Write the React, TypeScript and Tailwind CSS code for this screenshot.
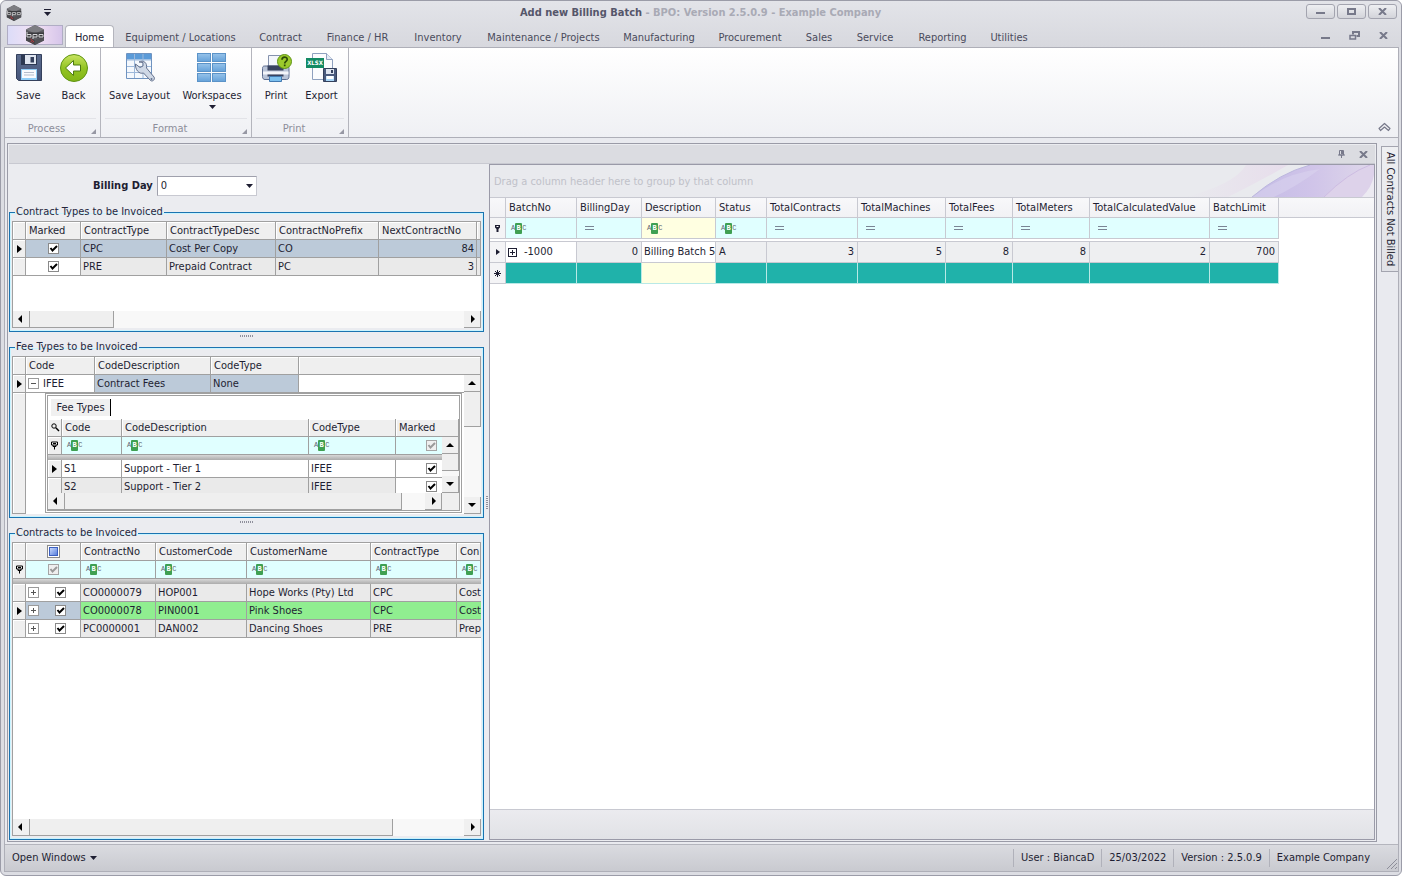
import { useState } from "react";
import type { ReactNode } from "react";
import clsx from "clsx";

const tabs = [
  { name: "Home", width: "w-[49px]" },
  { name: "Equipment / Locations", width: "w-[133px]" },
  { name: "Contract", width: "w-[67px]" },
  { name: "Finance / HR", width: "w-[87px]" },
  { name: "Inventory", width: "w-[74px]" },
  { name: "Maintenance / Projects", width: "w-[137px]" },
  { name: "Manufacturing", width: "w-[94px]" },
  { name: "Procurement", width: "w-[88px]" },
  { name: "Sales", width: "w-[50px]" },
  { name: "Service", width: "w-[62px]" },
  { name: "Reporting", width: "w-[73px]" },
  { name: "Utilities", width: "w-[60px]" },
];

const contractTypes = [
  { type: "CPC", desc: "Cost Per Copy", prefix: "CO", next: 84 },
  { type: "PRE", desc: "Prepaid Contract", prefix: "PC", next: 3 },
];

const feeTypes = [
  { code: "S1", desc: "Support - Tier 1", type: "IFEE" },
  { code: "S2", desc: "Support - Tier 2", type: "IFEE" },
];

const contracts = [
  { no: "CO0000079", customer: "HOP001", name: "Hope Works (Pty) Ltd", type: "CPC", desc: "Cost" },
  { no: "CO0000078", customer: "PIN0001", name: "Pink Shoes", type: "CPC", desc: "Cost" },
  { no: "PC0000001", customer: "DAN002", name: "Dancing Shoes", type: "PRE", desc: "Prep" },
];

const batchColumns = [
  { name: "BatchNo", width: "w-[71px]", filter: "abc" },
  { name: "BillingDay", width: "w-[65px]", filter: "eq" },
  { name: "Description", width: "w-[74px]", filter: "abc" },
  { name: "Status", width: "w-[51px]", filter: "abc" },
  { name: "TotalContracts", width: "w-[91px]", filter: "eq" },
  { name: "TotalMachines", width: "w-[88px]", filter: "eq" },
  { name: "TotalFees", width: "w-[67px]", filter: "eq" },
  { name: "TotalMeters", width: "w-[77px]", filter: "eq" },
  { name: "TotalCalculatedValue", width: "w-[120px]", filter: "eq" },
  { name: "BatchLimit", width: "w-[69px]", filter: "eq" },
];

/* ---------- icons ---------- */

const BpoLogo = ({ className }: { className: string }) => (
  <svg viewBox="0 0 20 20" className={className} aria-hidden="true">
    <path d="M10 0l9 4.600v10.800L10 20l-9-4.600V4.600z" fill="#5c5c61" />
    <path d="M10 0l9 4.600-9 4-9-4z" fill="#7d7d82" />
    <path d="M1 11l9 4v5l-9-4.600z" fill="#46464a" />
    <path d="M19 11l-9 4v5l9-4.600z" fill="#515156" />
    <path d="M1 7.500h18v5H1z" fill="#3a3a3e" />
    <path d="M2 7v5h4V9.500H2M8 14V9.500h4V12H8M14 9.500h4V12h-4z" fill="none" stroke="#d6d6d8" />
    <path d="M5.500 14l2 1.500-2 1.500M9 16l-1.500 1.500" fill="none" stroke="#c0353b" />
  </svg>
);

const DownArrow = ({ className }: { className?: string }) => (
  <svg viewBox="0 0 7 4" className={clsx("h-1 w-[7px] shrink-0 fill-[#1e1e32]", className)} aria-hidden="true">
    <path d="M0 0h7L3.500 4z" />
  </svg>
);

const SaveIcon = () => (
  <svg viewBox="0 0 28 30" className="h-[30px] w-7" aria-hidden="true">
    <defs>
      <linearGradient id="disk" x1="0" y1="0" x2="0" y2="1">
        <stop offset="0" stopColor="#5b6c8e" />
        <stop offset="1" stopColor="#46557a" />
      </linearGradient>
    </defs>
    <path d="M1.500 1.500h25v26h-23l-2-2z" fill="url(#disk)" stroke="#34405c" />
    <path d="M6 2h16v10H6z" fill="#2c3852" />
    <path d="M10 2h11v9H10z" fill="#dfe5f0" />
    <path d="M15.500 4h3.500v5.500h-3.500z" fill="#34405c" />
    <path d="M6 16h16v11H6z" fill="#8fcdf7" />
    <path d="M7 17h14v8H7z" fill="#f8fafd" />
    <path d="M9 19.500h10M9 22h10" stroke="#b4bccb" />
  </svg>
);

const BackIcon = () => (
  <svg viewBox="0 0 30 30" className="size-[30px]" aria-hidden="true">
    <defs>
      <linearGradient id="ball" x1="0" y1="0" x2="0" y2="1">
        <stop offset="0" stopColor="#c9e462" />
        <stop offset="0.500" stopColor="#93c422" />
        <stop offset="1" stopColor="#82b516" />
      </linearGradient>
    </defs>
    <circle cx="15" cy="15" r="13.500" fill="url(#ball)" stroke="#5f9413" />
    <path d="M6.500 15l8-7.500v4.500h7v6h-7v4.500z" fill="#fff" stroke="#4d7a12" strokeLinejoin="round" />
  </svg>
);

const LayoutIcon = () => (
  <svg viewBox="0 0 30 30" className="size-[30px]" aria-hidden="true">
    <path d="M1.500.500h25v25h-25z" fill="#f4f8fd" stroke="#6f93c0" />
    <path d="M2 1h24v5.500H2z" fill="#5b9bd8" />
    <path d="M2 7h24M2 13.500h24M2 19.500h24M9.500 1v24M18 1v24" stroke="#9db8da" />
    <path
      d="M10.500 11l4.500 3.500 3-1.500v-3.500l-4-.500c4.500-2.500 8.500 1 7.500 6l7.500 9c1.500 2.500-1.500 5-3.500 3.500L18.500 20c-4.500 1.500-8.500-3.500-8-9z"
      fill="#cfd8e6"
      stroke="#65728e"
      strokeLinejoin="round"
    />
    <circle cx="26.500" cy="26" r="1" fill="#65728e" />
  </svg>
);

const WorkspacesIcon = () => (
  <svg viewBox="0 0 30 30" className="size-[30px]" aria-hidden="true">
    <defs>
      <linearGradient id="pane" x1="0" y1="0" x2="0" y2="1">
        <stop offset="0" stopColor="#97c3ea" />
        <stop offset="1" stopColor="#64a1d9" />
      </linearGradient>
    </defs>
    {[0.5, 10.5, 20.5].map((y) => (
      <g key={y} fill="url(#pane)" stroke="#5b93c8">
        <rect x="0.500" y={y} width="13" height="8" />
        <rect x="15.500" y={y} width="13" height="8" />
      </g>
    ))}
  </svg>
);

const PrintIcon = () => (
  <svg viewBox="0 0 32 30" className="h-[30px] w-8" aria-hidden="true">
    <path d="M8.500 2.500h14v12h-14z" fill="#f3f6fb" stroke="#8592ad" />
    <path d="M4.500 13h22.500c1.500 0 2 1 2 2.500v8c0 2-1 3-2.500 3H5c-1.500 0-2.500-1-2.500-3v-8c0-1.500.500-2.500 2-2.500z" fill="#b9c4d8" stroke="#5c6c8f" />
    <path d="M7.500 12.500h16v5h-16z" fill="#38435f" />
    <path d="M3 18.500h25.500v3H3z" fill="#f3f5fa" />
    <path d="M7.500 21.500h16v2h-16z" fill="#38435f" />
    <path d="M9.500 23.500h12v5h-12z" fill="#7cc0ef" stroke="#4379b0" />
    <circle cx="24.500" cy="8.500" r="7" fill="#9ccb2c" stroke="#5f9413" />
    <path d="M22 6.800c0-3.600 5.200-3.400 5.200-.400 0 2-2.500 1.900-2.500 4M24.700 11.600v1.600" fill="none" stroke="#2c4a08" strokeWidth="1.700" />
  </svg>
);

const ExportIcon = () => (
  <svg viewBox="0 0 32 30" className="h-[30px] w-8" aria-hidden="true">
    <path d="M6.500.500h14l6 6v20h-20z" fill="#fbfcfe" stroke="#8fa1bf" />
    <path d="M20.500.500v6h6" fill="#e4eaf4" stroke="#8fa1bf" />
    <path d="M0 5h18v10H0z" fill="#138a63" />
    <text x="9" y="12.200" fontSize="6" fontWeight="bold" fill="#fff" textAnchor="middle">
      XLSX
    </text>
    <path d="M17.500 15.500h13v13h-13z" fill="#4b5b7e" stroke="#34405c" />
    <path d="M20 16h8v5h-8z" fill="#dfe5f0" />
    <path d="M25 17h2v3h-2z" fill="#34405c" />
    <path d="M20 23h8v5h-8z" fill="#a8d6f7" />
    <path d="M20.500 23h7v3h-7z" fill="#fff" />
  </svg>
);

const ABC = () => (
  <span className="flex h-[11px] items-center font-['Liberation_Mono',monospace] text-[7px] leading-[11px] text-[#5d6570]" aria-hidden="true">
    <span>A</span>
    <span className="w-[7px] rounded-[1px] bg-[#3fa052] text-center font-bold text-white">B</span>
    <span>C</span>
  </span>
);

const Equals = () => <span className="h-1 w-[9px] border-y border-[#7a8494]" aria-hidden="true" />;

const FilterPin = () => (
  <svg viewBox="0 0 7 9" className="mx-auto h-[9px] w-[7px]" aria-hidden="true">
    <path d="M.500 1h6v3h-6zM2 4v1.500h3V4M3.500 5v3.500M2 2.500h3" fill="none" stroke="#000" />
  </svg>
);

const RowPointer = () => (
  <svg viewBox="0 0 5 8" className="mx-auto h-2 w-[5px]" aria-hidden="true">
    <path d="M0 0l5 4-5 4z" />
  </svg>
);

const CloseGlyph = () => (
  <svg viewBox="0 0 9 7" className="h-[7px] w-[9px]" aria-hidden="true">
    <path d="M1 0l7 7M8 0L1 7" stroke="#77798a" strokeWidth="2" />
  </svg>
);

const MinGlyph = () => <span className="mt-1 block h-0.5 w-[9px] bg-[#77798a]" aria-hidden="true" />;

const RestoreGlyph = () => (
  <svg viewBox="0 0 11 9" className="h-[9px] w-[11px]" fill="none" stroke="#77798a" aria-hidden="true">
    <path d="M4 3.500V1h6v4H7.500" strokeWidth="2" />
    <path d="M1 4.500h5.500V8H1z" strokeWidth="1.500" />
  </svg>
);

/* ---------- small controls ---------- */

const CheckBox = ({ label, dim, checked = true }: { label: string; dim?: boolean; checked?: boolean }) => {
  const [on, setOn] = useState(checked);
  return (
    <span className="relative block size-[11px] shrink-0">
      <input
        type="checkbox"
        aria-label={label}
        checked={on}
        onChange={(e) => setOn(e.target.checked)}
        className={clsx("block size-[11px] appearance-none border", dim ? "border-[#a5a5a5] bg-[#efefef]" : "border-[#8a8a8a] bg-white")}
      />
      {on && (
        <svg viewBox="0 0 11 11" className="pointer-events-none absolute inset-0 size-[11px]" aria-hidden="true">
          <path d="M2.500 5l2 2.500L9 3" fill="none" stroke={dim ? "#9a9a9a" : "#000"} strokeWidth="2" />
        </svg>
      )}
    </span>
  );
};

const Expander = ({ open = false, dark = false }: { open?: boolean; dark?: boolean }) => (
  <button
    aria-label={open ? "Collapse row" : "Expand row"}
    className={clsx("flex shrink-0 items-center justify-center border bg-white", dark ? "size-[9px] border-[#1e1e32]" : "size-[11px] border-[#9a9a9a]")}
  >
    <svg viewBox="0 0 5 5" className="size-[5px]" aria-hidden="true">
      <path d={open ? "M0 2.500h5" : "M0 2.500h5M2.500 0v5"} stroke={dark ? "#1e1e32" : "#555"} />
    </svg>
  </button>
);

const arrows = {
  left: "M6 1v8L2 5z",
  right: "M4 1v8l4-4z",
  up: "M1 7h8L5 3z",
  down: "M1 3h8L5 7z",
};

const ScrollButton = ({ dir }: { dir: keyof typeof arrows }) => (
  <button
    aria-label={`Scroll ${dir}`}
    className="flex size-[17px] shrink-0 items-center justify-center border-r border-b border-[#a0a0a0] bg-[#f0f0f0]"
  >
    <svg viewBox="0 0 10 10" className="size-2.5" aria-hidden="true">
      <path d={arrows[dir]} />
    </svg>
  </button>
);

const HScroll = ({ thumb }: { thumb: string }) => (
  <div className="flex h-[17px] shrink-0 bg-[#f8f8f8]">
    <ScrollButton dir="left" />
    <div className={clsx("border-r border-b border-[#a0a0a0] bg-[#efefef]", thumb)} />
    <div className="flex-1" />
    <ScrollButton dir="right" />
  </div>
);

const VScroll = ({ thumb }: { thumb: string }) => (
  <>
    <ScrollButton dir="up" />
    <div className={clsx("border-r border-b border-[#a0a0a0] bg-[#efefef]", thumb)} />
    <div className="flex-1" />
    <ScrollButton dir="down" />
  </>
);

/* ---------- left side grids ---------- */

const Th = ({ children, className = "pl-[3px]" }: { children?: ReactNode; className?: string }) => (
  <th className={clsx("h-[18px] overflow-hidden border-r border-b border-[#a0a0a0] bg-[#efefef] p-0 text-left font-normal whitespace-nowrap shadow-[inset_1px_1px_#fff]", className)}>
    {children}
  </th>
);

const Td = ({ children, className = "bg-[#eaeaea]" }: { children?: ReactNode; className?: string }) => (
  <td className={clsx("h-[18px] overflow-hidden border-r border-b border-[#a0a0a0] p-0 pl-0.5 whitespace-nowrap", className)}>{children}</td>
);

const Indicator = ({ children }: { children?: ReactNode }) => (
  <td className="h-[18px] border-r border-b border-[#a0a0a0] bg-[#efefef] p-0 shadow-[inset_1px_1px_#fff]">{children}</td>
);

const FilterCell = ({ name }: { name?: string }) => (
  <td className="h-[18px] overflow-hidden border-r border-b border-[#a0a0a0] bg-[#e0ffff] p-0">
    {name && (
      <span className="flex items-center pl-[5px]">
        <ABC />
        <input aria-label={`Filter ${name}`} className="w-0 min-w-0 flex-1 bg-transparent outline-none" />
      </span>
    )}
  </td>
);

const Band = ({ span }: { span: number }) => (
  <tr>
    <td colSpan={span} className="h-[5px] border-b border-[#b0b0b0] bg-linear-to-b from-[#d8d8d8] to-[#b4b4b4] p-0" />
  </tr>
);

const GroupBox = ({ title, className, children }: { title: string; className?: string; children: ReactNode }) => (
  <fieldset className={clsx("flex min-w-0 flex-col border border-[#1a73b0] px-0.5 pt-px pb-[3px] shadow-[inset_0_0_0_1px_#c8f4ff]", className)}>
    <legend className="ml-[3px] h-4 px-px leading-4 text-[#26263c]">{title}</legend>
    <div className="flex min-h-0 flex-1 flex-col overflow-hidden border-t border-l border-[#a0a0a0] bg-white">{children}</div>
  </fieldset>
);

const grid = "w-full table-fixed border-separate border-spacing-0 leading-4";

const ContractTypesGrid = () => (
  <table className={grid}>
    <colgroup>
      <col className="w-[13px]" />
      <col className="w-[55px]" />
      <col className="w-[86px]" />
      <col className="w-[109px]" />
      <col className="w-[103px]" />
      <col className="w-[98px]" />
      <col />
    </colgroup>
    <thead>
      <tr>
        <Th />
        <Th>Marked</Th>
        <Th>ContractType</Th>
        <Th>ContractTypeDesc</Th>
        <Th>ContractNoPrefix</Th>
        <Th>NextContractNo</Th>
        <Th />
      </tr>
    </thead>
    <tbody>
      {contractTypes.map((row, i) => {
        const bg = i === 0 ? "bg-[#bccad9]" : "bg-[#eaeaea]";
        return (
          <tr key={row.type}>
            <Indicator>{i === 0 && <RowPointer />}</Indicator>
            <Td className={i === 0 ? bg : "bg-white"}>
              <span className="flex justify-center pr-0.5">
                <CheckBox label={`Mark ${row.type}`} />
              </span>
            </Td>
            <Td className={bg}>{row.type}</Td>
            <Td className={bg}>{row.desc}</Td>
            <Td className={bg}>{row.prefix}</Td>
            <Td className={clsx(bg, "pr-0.5 text-right")}>{row.next}</Td>
            <Td className={bg} />
          </tr>
        );
      })}
    </tbody>
  </table>
);

const FeeDetail = () => (
  <div className="mr-[19px] ml-[19px] flex h-[120px] flex-col border-[3px] border-double border-[#a0a0a0] bg-white">
    <div className="flex h-[23px] shrink-0 items-center pl-[3px]">
      <button className="h-[17px] w-[60px] border-r border-black bg-[#f0f0f0] text-center leading-4">Fee Types</button>
    </div>
    <div className="relative flex-1 overflow-hidden">
      <table className={grid}>
        <colgroup>
          <col className="w-[14px]" />
          <col className="w-[60px]" />
          <col className="w-[187px]" />
          <col className="w-[87px]" />
          <col />
        </colgroup>
        <thead>
          <tr>
            <Th>
              <svg viewBox="0 0 9 9" className="size-[9px]" fill="none" stroke="#000" aria-hidden="true">
                <circle cx="3" cy="3" r="2.200" />
                <path d="M4.800 4.800L8 8" strokeWidth="1.500" />
              </svg>
            </Th>
            <Th>Code</Th>
            <Th>CodeDescription</Th>
            <Th>CodeType</Th>
            <Th>Marked</Th>
          </tr>
        </thead>
        <tbody>
          <tr>
            <Indicator>
              <FilterPin />
            </Indicator>
            <FilterCell name="Code" />
            <FilterCell name="CodeDescription" />
            <FilterCell name="CodeType" />
            <Td className="bg-[#e0ffff]">
              <span className="flex justify-end pr-[21px]">
                <CheckBox label="Filter Marked" dim />
              </span>
            </Td>
          </tr>
          <Band span={5} />
          {feeTypes.map((row, i) => {
            const bg = i === 0 ? "bg-white" : "bg-[#eaeaea]";
            return (
              <tr key={row.code}>
                <Indicator>{i === 0 && <RowPointer />}</Indicator>
                <Td className={bg}>{row.code}</Td>
                <Td className={bg}>{row.desc}</Td>
                <Td className={bg}>{row.type}</Td>
                <Td className="bg-white">
                  <span className="flex justify-end pr-[21px]">
                    <CheckBox label={`Mark ${row.code}`} />
                  </span>
                </Td>
              </tr>
            );
          })}
        </tbody>
      </table>
      <div className="absolute top-[18px] right-0 bottom-0 flex w-[17px] flex-col bg-[#f8f8f8]">
        <VScroll thumb="h-[17px]" />
      </div>
    </div>
    <div className="flex shrink-0">
      <div className="min-w-0 flex-1">
        <HScroll thumb="w-[337px]" />
      </div>
      <div className="w-[17px] bg-[#efefef]" />
    </div>
  </div>
);

const FeeTypesGrid = () => (
  <div className="relative">
    <table className={grid}>
      <colgroup>
        <col className="w-[13px]" />
        <col className="w-[69px]" />
        <col className="w-[116px]" />
        <col className="w-[88px]" />
        <col />
      </colgroup>
      <thead>
        <tr>
          <Th />
          <Th>Code</Th>
          <Th>CodeDescription</Th>
          <Th>CodeType</Th>
          <Th />
        </tr>
      </thead>
      <tbody>
        <tr>
          <Indicator>
            <RowPointer />
          </Indicator>
          <Td className="bg-white">
            <span className="flex items-center gap-1">
              <Expander open />
              IFEE
            </span>
          </Td>
          <Td className="bg-[#bccad9]">Contract Fees</Td>
          <Td className="bg-[#bccad9]">None</Td>
          <Td className="bg-white" />
        </tr>
        <tr>
          <Indicator />
          <td colSpan={4} className="p-0 pb-px">
            <FeeDetail />
          </td>
        </tr>
      </tbody>
    </table>
    <div className="absolute top-[18px] right-0 bottom-0 flex w-[17px] flex-col bg-[#f8f8f8]">
      <VScroll thumb="h-[35px]" />
    </div>
  </div>
);

const ContractsGrid = () => (
  <table className={grid}>
    <colgroup>
      <col className="w-[13px]" />
      <col className="w-[55px]" />
      <col className="w-[75px]" />
      <col className="w-[91px]" />
      <col className="w-[124px]" />
      <col className="w-[86px]" />
      <col />
    </colgroup>
    <thead>
      <tr>
        <Th />
        <Th className="pl-0">
          <button aria-label="Mark all contracts" className="mx-auto block size-[13px] border border-[#8a8a8a] bg-white p-px">
            <span className="block size-[9px] border border-[#3b5fc0] bg-linear-to-br from-[#c9d8fb] to-[#5b80dc]" />
          </button>
        </Th>
        <Th>ContractNo</Th>
        <Th>CustomerCode</Th>
        <Th>CustomerName</Th>
        <Th>ContractType</Th>
        <Th>Con</Th>
      </tr>
    </thead>
    <tbody>
      <tr>
        <Indicator>
          <FilterPin />
        </Indicator>
        <Td className="bg-[#e0ffff]">
          <span className="flex justify-center pr-0.5">
            <CheckBox label="Filter marked contracts" dim />
          </span>
        </Td>
        <FilterCell name="ContractNo" />
        <FilterCell name="CustomerCode" />
        <FilterCell name="CustomerName" />
        <FilterCell name="ContractType" />
        <FilterCell name="ContractTypeDesc" />
      </tr>
      <Band span={7} />
      {contracts.map((row, i) => {
        const bg = i === 1 ? "bg-[#90ee90]" : "bg-[#eaeaea]";
        return (
          <tr key={row.no}>
            <Indicator>{i === 1 && <RowPointer />}</Indicator>
            <Td className={i === 1 ? "bg-[#bccad9]" : "bg-white"}>
              <span className="flex items-center gap-4">
                <Expander />
                <CheckBox label={`Mark ${row.no}`} />
              </span>
            </Td>
            <Td className={bg}>{row.no}</Td>
            <Td className={bg}>{row.customer}</Td>
            <Td className={bg}>{row.name}</Td>
            <Td className={bg}>{row.type}</Td>
            <td className={clsx("h-[18px] border-b border-[#a0a0a0] p-0 pl-0.5", bg)}>{row.desc}</td>
          </tr>
        );
      })}
    </tbody>
  </table>
);

const Grip = () => (
  <div className="flex h-[7px] shrink-0 items-center justify-center gap-px" aria-hidden="true">
    {[0, 1, 2, 3, 4, 5, 6].map((n) => (
      <span key={n} className="h-0.5 w-px bg-[#8f909c]" />
    ))}
  </div>
);

/* ---------- right side grid ---------- */

const batchCell = "h-[21px] border-r border-b border-[#c8c9d1] p-0";
const headCell = "h-5 border-r border-b border-[#c8c9d1] p-0";
const newRowCell = "h-[21px] border-r border-b border-[#b9e9e6] p-0";

const BatchGrid = () => (
  <table className="w-full table-fixed border-separate border-spacing-0 leading-[18px] text-[#1e1e32]">
    <colgroup>
      <col className="w-4" />
      {batchColumns.map((col) => (
        <col key={col.name} className={col.width} />
      ))}
      <col />
    </colgroup>
    <thead>
      <tr className="bg-linear-to-b from-[#f8f8fa] to-[#f1f1f4]">
        <th className={headCell} />
        {batchColumns.map((col) => (
          <th key={col.name} className={clsx(headCell, "pl-[3px] text-left font-normal")}>
            {col.name}
          </th>
        ))}
        <th className="border-b border-[#c8c9d1] p-0" />
      </tr>
    </thead>
    <tbody>
      <tr>
        <td className={clsx(batchCell, "bg-[#f4f4f6]")}>
          <svg viewBox="0 0 7 8" className="mx-auto h-2 w-[7px]" aria-hidden="true">
            <path d="M1 1h5v2.500L4.500 5v3h-2V5L1 3.500z" fill="#1e1e32" />
            <path d="M2.500 2h2v1h-2z" fill="#fff" />
          </svg>
        </td>
        {batchColumns.map((col) => (
          <td key={col.name} className={clsx(batchCell, col.name === "Description" ? "bg-[#ffffe1]" : "bg-[#e0ffff]")}>
            <span className={clsx("flex items-center", col.filter === "abc" ? "pl-[5px]" : "pl-2")}>
              {col.filter === "abc" ? <ABC /> : <Equals />}
              <input aria-label={`Filter ${col.name}`} className="w-0 min-w-0 flex-1 bg-transparent outline-none" />
            </span>
          </td>
        ))}
        <td />
      </tr>
      <tr>
        <td colSpan={11} className="h-[3px] border-b border-[#c8c9d1] bg-white p-0" />
        <td />
      </tr>
      <tr className="bg-[#eeeff1]">
        <td className={clsx(batchCell, "bg-[#f4f4f6]")}>
          <svg viewBox="0 0 4 6" className="mx-auto h-1.5 w-1" aria-hidden="true">
            <path d="M0 0l4 3-4 3z" fill="#1e1e32" />
          </svg>
        </td>
        <td className={clsx(batchCell, "bg-white")}>
          <span className="flex items-center gap-[7px] pl-0.5">
            <Expander dark />
            -1000
          </span>
        </td>
        <td className={clsx(batchCell, "pr-[3px] text-right")}>0</td>
        <td className={clsx(batchCell, "bg-white pl-0.5 whitespace-nowrap")}>Billing Batch 5</td>
        <td className={clsx(batchCell, "pl-[3px]")}>A</td>
        <td className={clsx(batchCell, "pr-[3px] text-right")}>3</td>
        <td className={clsx(batchCell, "pr-[3px] text-right")}>5</td>
        <td className={clsx(batchCell, "pr-[3px] text-right")}>8</td>
        <td className={clsx(batchCell, "pr-[3px] text-right")}>8</td>
        <td className={clsx(batchCell, "pr-[3px] text-right")}>2</td>
        <td className={clsx(batchCell, "pr-[3px] text-right")}>700</td>
        <td className="bg-white" />
      </tr>
      <tr className="bg-[#20b2aa]">
        <td className={clsx(batchCell, "bg-[#f4f4f6]")}>
          <svg viewBox="0 0 7 7" className="mx-auto size-[7px]" stroke="#1e1e32" aria-hidden="true">
            <path d="M3.500 0v7M0 3.500h7M1 1l5 5M6 1L1 6" />
          </svg>
        </td>
        {batchColumns.map((col) => (
          <td key={col.name} className={clsx(newRowCell, col.name === "Description" && "bg-[#ffffe1]")} />
        ))}
        <td className="bg-white" />
      </tr>
    </tbody>
  </table>
);

const GroupPanel = () => (
  <div className="relative flex h-[33px] shrink-0 items-center overflow-hidden border-b border-[#c8c9d1] bg-[#e9eaee] pt-0.5 pl-1 text-[#c0c1c9]">
    <svg viewBox="0 0 240 32" className="absolute top-0 right-0 h-8 w-60" aria-hidden="true">
      <defs>
        <linearGradient id="petal" x1="0" y1="0" x2="1" y2="0">
          <stop offset="0" stopColor="#c4bce6" />
          <stop offset="0.500" stopColor="#d0c4e9" />
          <stop offset="1" stopColor="#dfd8ea" />
        </linearGradient>
        <linearGradient id="haze" x1="0" y1="0" x2="1" y2="0">
          <stop offset="0" stopColor="#e9eaee" />
          <stop offset="1" stopColor="#e6d5ea" />
        </linearGradient>
      </defs>
      <path d="M50 32Q100 20 112 0h42q-24 14-60 32z" fill="url(#haze)" opacity="0.600" />
      <path d="M118 32Q146 8 176 0h64v32z" fill="url(#petal)" />
      <path d="M118 32Q150 8 186 4q-24 18-46 28z" fill="#dcd6f0" opacity="0.500" />
      <path d="M118 32Q146 8 176 0" fill="none" stroke="#bdb8de" />
      <path d="M190 32Q214 8 236 0h4v32z" fill="#ddd2ea" />
      <path d="M190 32Q214 8 236 0" fill="none" stroke="#cdbce2" />
      <path d="M228 32Q238 22 240 10v22z" fill="#eceaf2" />
    </svg>
    Drag a column header here to group by that column
  </div>
);

/* ---------- ribbon ---------- */

const RibbonButton = ({ label, icon, className, menu }: { label: string; icon: ReactNode; className: string; menu?: boolean }) => (
  <button className={clsx("flex h-full flex-col items-center pt-[5px] whitespace-nowrap", className)}>
    <span className="flex h-[30px] items-center">{icon}</span>
    <span className="mt-[5px] leading-4">{label}</span>
    {menu && <DownArrow className="mt-px" />}
  </button>
);

const RibbonGroup = ({ title, className, children }: { title: string; className: string; children: ReactNode }) => (
  <section className={clsx("flex flex-col border-r border-[#b4b5bd]", className)}>
    <div className="flex h-[72px]">{children}</div>
    <div className="relative mx-1 flex flex-1 items-center justify-center border-t border-[#e2e3e8] pt-0.5 pr-3 text-[#8d8e9a]">
      {title}
      <svg viewBox="0 0 5 5" className="absolute right-0 bottom-[3px] size-[5px] fill-[#9798a4]" aria-hidden="true">
        <path d="M5 0v5H0z" />
      </svg>
    </div>
  </section>
);

const captionButton = "flex h-[15px] w-[29px] items-center justify-center rounded-[3px] border border-[#a3a4af] bg-linear-to-b from-[#eeeff2] to-[#d3d4da]";

export default function App() {
  const [activeTab, setActiveTab] = useState("Home");
  const [day, setDay] = useState("0");

  return (
    <div className="flex min-h-screen flex-col rounded-md border border-[#9b9ca8] bg-[#dcdde3] pr-0.5 pb-[3px] pl-[3px] font-['DejaVu_Sans_Condensed','Noto_Sans',sans-serif] text-[11px] leading-4 text-[#1e1e32]">
      <header className="-mr-0.5 -ml-[3px] rounded-t-md bg-linear-to-b from-[#e3e4e9] to-[#d7d8de] px-[3px]">
        <div className="flex h-6 items-center pl-0.5">
          <BpoLogo className="size-4" />
          <button aria-label="Customize quick access" className="mb-0.5 ml-[22px] flex flex-col items-center gap-0.5">
            <span className="h-px w-[7px] bg-[#1e1e32]" />
            <DownArrow />
          </button>
          <h1 className="flex-1 pl-11 text-center font-bold text-[#a9aab5]">
            <span className="text-[#55566a]">Add new Billing Batch</span> - BPO: Version 2.5.0.9 - Example Company
          </h1>
          <div className="mb-1 flex gap-0.5 pr-px">
            <button aria-label="Minimize" className={captionButton}>
              <MinGlyph />
            </button>
            <button aria-label="Maximize" className={captionButton}>
              <span className="h-[7px] w-[9px] border-2 border-[#77798a]" />
            </button>
            <button aria-label="Close" className={captionButton}>
              <CloseGlyph />
            </button>
          </div>
        </div>
        <div className="flex h-[22px] items-end">
          <button
            aria-label="Application menu"
            className="mr-0.5 mb-0.5 ml-[3px] flex h-5 w-[56px] items-center justify-center border border-[#b0adc4] bg-linear-to-r from-[#dcdcf8] via-[#f3e2f4] to-[#d6c5ea]"
          >
            <BpoLogo className="size-5" />
          </button>
          <nav className="flex h-full flex-1" role="tablist">
            {tabs.map((tab) => (
              <button
                key={tab.name}
                role="tab"
                aria-selected={tab.name === activeTab}
                onClick={() => setActiveTab(tab.name)}
                className={clsx(
                  "h-full text-center whitespace-nowrap",
                  tab.width,
                  tab.name === activeTab ? "rounded-t-sm border border-b-0 border-[#b4b5bd] bg-white pt-0.5" : "pt-1 text-[#4a4b5c]",
                )}
              >
                {tab.name}
              </button>
            ))}
          </nav>
          <div className="mb-[7px] flex items-center gap-[19px] pr-2.5">
            <button aria-label="Minimize document">
              <MinGlyph />
            </button>
            <button aria-label="Restore document">
              <RestoreGlyph />
            </button>
            <button aria-label="Close document">
              <CloseGlyph />
            </button>
          </div>
        </div>
      </header>

      <div className="flex flex-1 flex-col border border-[#aeafb8] bg-[#e9eaef]">
        <div className="flex h-[90px] shrink-0 border-b border-[#aeafb8] bg-linear-to-b from-white to-[#eff0f4]">
          <RibbonGroup title="Process" className="w-24">
            <RibbonButton label="Save" icon={<SaveIcon />} className="w-[47px]" />
            <RibbonButton label="Back" icon={<BackIcon />} className="w-[43px]" />
          </RibbonGroup>
          <RibbonGroup title="Format" className="w-[151px]">
            <RibbonButton label="Save Layout" icon={<LayoutIcon />} className="w-[77px]" />
            <RibbonButton label="Workspaces" icon={<WorkspacesIcon />} className="w-[68px]" menu />
          </RibbonGroup>
          <RibbonGroup title="Print" className="w-[97px]">
            <RibbonButton label="Print" icon={<PrintIcon />} className="w-12" />
            <RibbonButton label="Export" icon={<ExportIcon />} className="w-[43px]" />
          </RibbonGroup>
          <button aria-label="Collapse ribbon" className="mt-auto mr-[7px] mb-[5px] ml-auto">
            <svg viewBox="0 0 13 10" className="h-2.5 w-[13px]" fill="none" stroke="#77798a" strokeWidth="1.200" strokeLinejoin="round" aria-hidden="true">
              <path d="M1 6.500l5.500-5 5.500 5-1.500 2-4-3.500-4 3.500z" />
            </svg>
          </button>
        </div>

        <div className="flex flex-1 pt-[5px] pb-0.5 pl-0.5">
          <main className="flex min-w-0 flex-1 flex-col border border-[#9a9ba7] bg-[#ebecf0] p-px">
            <div className="flex h-[19px] shrink-0 items-center justify-end gap-3.5 border-b border-[#c8c9d1] bg-[#dbdce1] pr-[7px]">
              <button aria-label="Auto hide">
                <svg viewBox="0 0 7 8" className="h-2 w-[7px]" fill="none" stroke="#77798a" aria-hidden="true">
                  <path d="M1.500.500h4v4.500h-4zM4.500 1v3M3.500 1v3M0 5h7M3.500 5v3" />
                </svg>
              </button>
              <button aria-label="Close panel">
                <CloseGlyph />
              </button>
            </div>
            <div className="flex flex-1">
              <div className="flex w-[475px] shrink-0 flex-col">
                <div className="flex h-10 shrink-0 items-center gap-1 pt-1 pl-[84px]">
                  <label htmlFor="billing-day" className="font-bold">
                    Billing Day
                  </label>
                  <div className="relative">
                    <select
                      id="billing-day"
                      value={day}
                      onChange={(e) => setDay(e.target.value)}
                      className="block h-5 w-[100px] appearance-none border border-[#c8c9d1] border-t-[#9fa0ac] border-l-[#9fa0ac] bg-white pl-[3px] leading-4 outline-none"
                    >
                      <option>0</option>
                      <option>1</option>
                      <option>15</option>
                      <option>25</option>
                    </select>
                    <DownArrow className="pointer-events-none absolute top-2 right-1" />
                  </div>
                </div>
                <GroupBox title="Contract Types to be Invoiced" className="shrink-0">
                  <div className="h-[89px]">
                    <ContractTypesGrid />
                  </div>
                  <HScroll thumb="w-[84px]" />
                </GroupBox>
                <Grip />
                <GroupBox title="Fee Types to be Invoiced" className="shrink-0">
                  <FeeTypesGrid />
                </GroupBox>
                <Grip />
                <GroupBox title="Contracts to be Invoiced" className="flex-1">
                  <ContractsGrid />
                  <div className="flex-1" />
                  <HScroll thumb="w-[363px]" />
                </GroupBox>
              </div>
              <div className="flex w-[5px] shrink-0 items-center justify-center" aria-hidden="true">
                <div className="flex flex-col gap-px">
                  {[0, 1, 2, 3, 4, 5, 6].map((n) => (
                    <span key={n} className="h-px w-0.5 bg-[#8f909c]" />
                  ))}
                </div>
              </div>
              <div className="flex min-w-0 flex-1 flex-col border border-[#9a9aa8] bg-white">
                <GroupPanel />
                <BatchGrid />
                <div className="flex-1" />
                <div className="h-[30px] shrink-0 border-t border-[#c8c9d1] bg-linear-to-b from-[#ebebef] to-[#e1e2e6]" />
              </div>
            </div>
          </main>
          <aside className="w-[21px] shrink-0 pt-[3px] pl-1">
            <button className="h-[126px] w-[17px] border border-r-0 border-[#a3a4af] bg-linear-to-b from-[#eeeff2] to-[#e1e2e7] leading-4 whitespace-nowrap [writing-mode:vertical-rl]">
              All Contracts Not Billed
            </button>
          </aside>
        </div>

        <footer className="flex h-[27px] shrink-0 items-center border-t border-[#b4b5bd] bg-linear-to-b from-[#dadbe0] to-[#c9cad0] pl-[7px]">
          <button className="flex items-center gap-1">
            Open Windows <DownArrow />
          </button>
          <div className="ml-auto flex items-center leading-[18px]">
            <span className="border-l border-[#b0b1ba] px-[7px]">User : BiancaD</span>
            <span className="border-l border-[#b0b1ba] px-[7px]">25/03/2022</span>
            <span className="border-l border-[#b0b1ba] px-[7px]">Version : 2.5.0.9</span>
            <span className="border-l border-[#b0b1ba] pl-[7px]">Example Company</span>
          </div>
          <svg viewBox="0 0 12 12" className="mt-3 ml-4 size-3" stroke="#8d8e9a" aria-hidden="true">
            <path d="M1 11L11 1M5 11l6-6M9 11l2-2" />
          </svg>
        </footer>
      </div>
    </div>
  );
}
